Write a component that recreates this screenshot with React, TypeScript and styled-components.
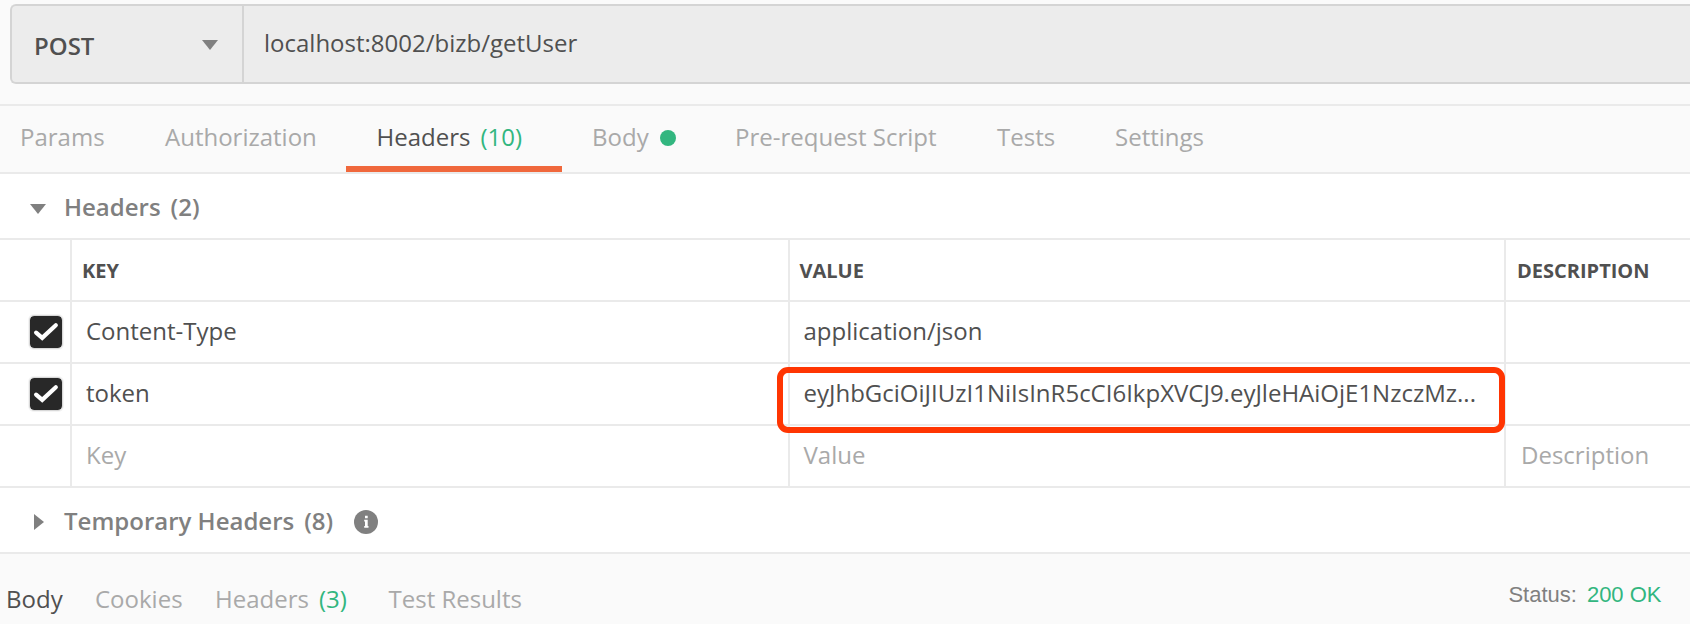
import React from "react";
import styled, { createGlobalStyle } from "styled-components";

const GlobalStyle = createGlobalStyle`
  * { box-sizing: border-box; }
  html, body { margin: 0; padding: 0; overflow: hidden; }
  body {
    background: #fafafa;
    font-family: "Open Sans", "Liberation Sans", sans-serif;
    font-size: 24px;
    color: #505050;
  }
`;

const Page = styled.main`
  display: flex;
  flex-direction: column;
  width: 100%;
  height: 624px;
  overflow: hidden;
  white-space: nowrap;
`;

const RequestBar = styled.div`
  flex: none;
  height: 106px;
  padding: 4px 0 0 10px;
  border-bottom: 2px solid #eaeaea;
`;

const RequestField = styled.div`
  display: flex;
  height: 80px;
  border: 2px solid #d4d4d4;
  border-right: 0;
  border-radius: 6px 0 0 6px;
  background: #ececec;
`;

const Method = styled.div`
  display: flex;
  align-items: center;
  justify-content: space-between;
  width: 232px;
  padding: 2px 24px 0 22px;
  border-right: 2px solid #d4d4d4;
  font-weight: 600;
  font-size: 24px;
`;

const Url = styled.div`
  display: flex;
  align-items: center;
  padding: 0 0 3px 20px;
`;

const Tabs = styled.nav`
  display: flex;
  flex: none;
  height: 68px;
  border-bottom: 2px solid #eaeaea;
`;

const Tab = styled.div<{ $active?: boolean; $width: number; $inset?: number }>`
  display: flex;
  align-items: center;
  width: ${(p) => p.$width}px;
  padding: 1px 0 0 ${(p) => p.$inset ?? 31}px;
  border-bottom: 6px solid ${(p) => (p.$active ? "#f0683c" : "transparent")};
  color: ${(p) => (p.$active ? "#505050" : "#a9a9a9")};
`;

const Count = styled.span`
  margin-left: 10px;
  color: #32b67f;
`;

const Dot = styled.span`
  width: 16px;
  height: 16px;
  margin: 2px 0 0 11px;
  border-radius: 50%;
  background: #32b67f;
`;

const Section = styled.div`
  display: flex;
  flex: none;
  align-items: center;
  height: 66px;
  padding-left: 30px;
  background: #fff;
  border-bottom: 2px solid #eaeaea;
  font-weight: 600;
  color: #808080;
`;

const Caret = styled.span<{ $open?: boolean }>`
  display: flex;
  width: 34px;
  padding-top: ${(p) => (p.$open ? 6 : 4)}px;
`;

const SectionCount = styled.span`
  margin-left: 10px;
`;

const InfoSlot = styled.span`
  display: flex;
  margin-left: 21px;
  padding-top: 4px;
`;

const Table = styled.div`
  flex: none;
  background: #fff;
`;

const Row = styled.div`
  display: grid;
  grid-template-columns: 72px 718px 716px 1fr;
  height: 62px;
  border-bottom: 2px solid #eaeaea;
`;

const Cell = styled.div<{ $muted?: boolean }>`
  position: relative;
  display: flex;
  align-items: center;
  padding: 0 0 3px 14px;
  border-right: 2px solid #eaeaea;
  color: ${(p) => (p.$muted ? "#a9a9a9" : "#505050")};
  &:nth-child(3) { padding-left: 13.5px; }
  &:last-child { padding-left: 15px; border-right: 0; }
`;

const HeadCell = styled(Cell)`
  padding: 0 0 0 10px;
  font-size: 20px;
  font-weight: 700;
  &:nth-child(3) { padding-left: 9.5px; }
  &:last-child { padding-left: 11px; }
`;

const CheckCell = styled(Cell)`
  padding: 0 0 0 29px;
`;

const Checkbox = styled.span`
  display: flex;
  flex: none;
  width: 34px;
  height: 34px;
  border-radius: 5px;
  background: #282828;
  background-clip: padding-box;
  border: 1px solid #d8d8d8;
  box-shadow: 0 0 0 1px #f4f4f4;
`;

const Highlight = styled.span`
  position: absolute;
  left: -13.5px;
  top: 2.5px;
  z-index: 1;
  width: 728px;
  height: 66px;
  border: 6px solid #ff3502;
  border-radius: 11px;
`;

const ResponseBar = styled.div`
  display: flex;
  flex: none;
  justify-content: space-between;
  height: 70px;
  padding: 28px 28.5px 0 6px;
`;

const ResponseTabs = styled.nav`
  display: flex;
`;

const ResponseTab = styled.span<{ $active?: boolean; $width: number }>`
  width: ${(p) => p.$width}px;
  color: ${(p) => (p.$active ? "#505050" : "#a9a9a9")};
`;

const Status = styled.div`
  font-family: "Liberation Sans", Arial, sans-serif;
  font-size: 22px;
  color: #808080;
`;

const StatusValue = styled.span`
  margin-left: 10px;
  color: #32b67f;
`;

const DownIcon = () => (
  <svg width="16" height="10" viewBox="0 0 16 10">
    <path d="M0 0h16L8 10z" fill="#808080" />
  </svg>
);

const RightIcon = () => (
  <svg width="16" height="16" viewBox="0 0 16 16">
    <path d="M4 0v16l10-8z" fill="#808080" />
  </svg>
);

const InfoIcon = () => (
  <svg width="24" height="24" viewBox="0 0 24 24">
    <circle cx="12" cy="12" r="12" fill="#808080" />
    <path d="M11 5.8h2.7v2.5H11zM10.2 9.8h3.5v6.3h.8v1.6h-4.3v-1.6h.8v-4.7h-.8z" fill="#fff" />
  </svg>
);

const CheckIcon = () => (
  <svg width="32" height="32" viewBox="0 0 32 32">
    <path d="M6.1 16.7l6.1 5.2L25.8 9.3" fill="none" stroke="#fff" strokeWidth="4.2" strokeLinecap="round" strokeLinejoin="miter" />
  </svg>
);

const rows = [
  { key: "Content-Type", value: "application/json" },
  { key: "token", value: "eyJhbGciOiJIUzI1NiIsInR5cCI6IkpXVCJ9.eyJleHAiOjE1NzczMz...", highlighted: true },
];

export default function App() {
  return (
    <>
      <GlobalStyle />
      <Page>
        <RequestBar>
          <RequestField>
            <Method>POST<DownIcon /></Method>
            <Url>localhost:8002/bizb/getUser</Url>
          </RequestField>
        </RequestBar>
        <Tabs>
          <Tab $width={134} $inset={20}>Params</Tab>
          <Tab $width={212}>Authorization</Tab>
          <Tab $width={216} $inset={30.5} $active>Headers<Count>(10)</Count></Tab>
          <Tab $width={142} $inset={30}>Body<Dot /></Tab>
          <Tab $width={262}>Pre-request Script</Tab>
          <Tab $width={118}>Tests</Tab>
          <Tab $width={150}>Settings</Tab>
        </Tabs>
        <Section>
          <Caret $open><DownIcon /></Caret>
          Headers<SectionCount>(2)</SectionCount>
        </Section>
        <Table>
          <Row>
            <HeadCell />
            <HeadCell>KEY</HeadCell>
            <HeadCell>VALUE</HeadCell>
            <HeadCell>DESCRIPTION</HeadCell>
          </Row>
          {rows.map((row) => (
            <Row key={row.key}>
              <CheckCell><Checkbox><CheckIcon /></Checkbox></CheckCell>
              <Cell>{row.key}</Cell>
              <Cell>{row.value}{row.highlighted && <Highlight />}</Cell>
              <Cell />
            </Row>
          ))}
          <Row>
            <Cell />
            <Cell $muted>Key</Cell>
            <Cell $muted>Value</Cell>
            <Cell $muted>Description</Cell>
          </Row>
        </Table>
        <Section>
          <Caret><RightIcon /></Caret>
          Temporary Headers<SectionCount>(8)</SectionCount>
          <InfoSlot><InfoIcon /></InfoSlot>
        </Section>
        <ResponseBar>
          <ResponseTabs>
            <ResponseTab $width={89} $active>Body</ResponseTab>
            <ResponseTab $width={120}>Cookies</ResponseTab>
            <ResponseTab $width={173.5}>Headers<Count>(3)</Count></ResponseTab>
            <ResponseTab $width={140}>Test Results</ResponseTab>
          </ResponseTabs>
          <Status>Status:<StatusValue>200 OK</StatusValue></Status>
        </ResponseBar>
      </Page>
    </>
  );
}
